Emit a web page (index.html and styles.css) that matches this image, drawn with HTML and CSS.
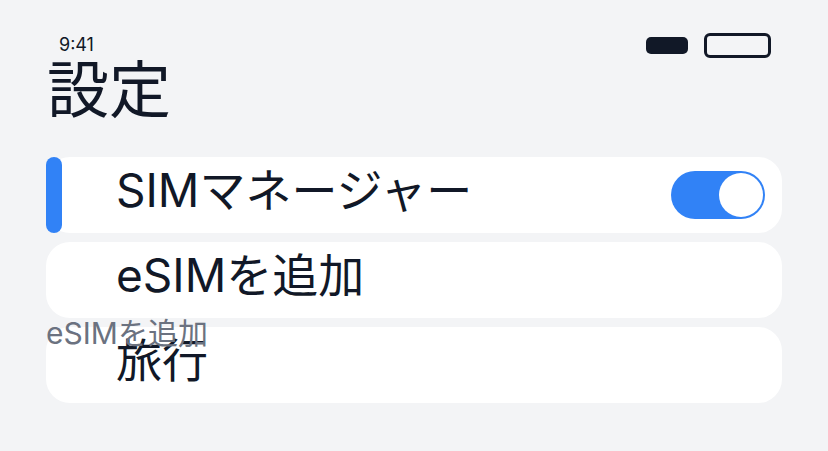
FILE: index.html
```html
<!DOCTYPE html>
<html lang="ja">
<head>
    <meta charset="UTF-8">
    <meta name="viewport" content="width=device-width, initial-scale=1.0">
    <title>設定</title>
    <link rel="stylesheet" href="styles.css">
</head>
<body>
    <div class="status-bar">
        <span class="time">9:41</span>
        <div class="status-icons">
            <span class="signal"></span>
            <span class="battery"></span>
        </div>
    </div>

    <h1 class="page-title">設定</h1>

    <div class="settings-list">
        <div class="setting-row selected">
            <span class="row-label">SIMマネージャー</span>
            <span class="toggle on"><span class="knob"></span></span>
        </div>
        <div class="setting-row">
            <span class="row-label">eSIMを追加</span>
        </div>
        <div class="setting-row">
            <span class="row-label">旅行</span>
        </div>
        <span class="hint">eSIMを追加</span>
    </div>
</body>
</html>
```

FILE: styles.css
```css
body {
    font-family: 'Inter', 'Noto Sans CJK JP', sans-serif;
    background-color: #f3f4f6;
    color: #111827;
    margin: 0;
    padding: 0 46px;
}

.status-bar {
    display: flex;
    justify-content: space-between;
    align-items: center;
    padding: 33px 11px 0 13px;
    height: 25px;
}

.time {
    font-size: 18px;
    margin-top: -2px;
}

.status-icons {
    display: flex;
    align-items: center;
    gap: 16px;
}

.signal {
    width: 42px;
    height: 17px;
    background-color: #111827;
    border-radius: 5px;
}

.battery {
    width: 61px;
    height: 19px;
    border: 3px solid #111827;
    border-radius: 6px;
}

.page-title {
    font-size: 62px;
    font-weight: 400;
    line-height: 1;
    margin: 2px 0 0 1px;
}

.settings-list {
    position: relative;
    display: flex;
    flex-direction: column;
    gap: 9px;
    margin-top: 35px;
}

.setting-row {
    position: relative;
    display: flex;
    align-items: center;
    justify-content: space-between;
    height: 76px;
    padding: 0 17px 0 70px;
    background-color: #ffffff;
    border-radius: 24px;
}

.setting-row.selected::before {
    content: '';
    position: absolute;
    left: 0;
    top: 0;
    bottom: 0;
    width: 16px;
    background-color: #3182f6;
    border-radius: 8px;
}

.row-label {
    font-size: 46px;
    line-height: 1;
    margin-top: -10px;
}

.toggle {
    display: flex;
    align-items: center;
    width: 94px;
    height: 48px;
    border-radius: 24px;
    background-color: #3182f6;
    padding: 2px;
    box-sizing: border-box;
    justify-content: flex-end;
}

.knob {
    width: 44px;
    height: 44px;
    border-radius: 50%;
    background-color: #ffffff;
}

.hint {
    position: absolute;
    left: 0;
    top: 152px;
    font-size: 30px;
    color: #6b7280;
}
```
